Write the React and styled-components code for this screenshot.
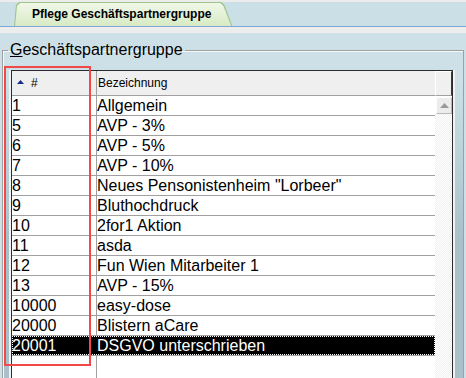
import React from 'react';
import styled, { createGlobalStyle } from 'styled-components';

const GlobalStyle = createGlobalStyle`
    body {
        margin: 0;
        background: #cde0e8;
        font-family: "Liberation Sans", Arial, sans-serif;
    }
`;

const rows = [
    { id: '1', name: 'Allgemein' },
    { id: '5', name: 'AVP - 3%' },
    { id: '6', name: 'AVP - 5%' },
    { id: '7', name: 'AVP - 10%' },
    { id: '8', name: 'Neues Pensonistenheim "Lorbeer"' },
    { id: '9', name: 'Bluthochdruck' },
    { id: '10', name: '2for1 Aktion' },
    { id: '11', name: 'asda' },
    { id: '12', name: 'Fun Wien Mitarbeiter 1' },
    { id: '13', name: 'AVP - 15%' },
    { id: '10000', name: 'easy-dose' },
    { id: '20000', name: 'Blistern aCare' },
    { id: '20001', name: 'DSGVO unterschrieben', selected: true },
];

function App() {
    return (
        <Screen>
            <GlobalStyle />
            <TabStrip>
                <Tab>
                    <span>Pflege Geschäftspartnergruppe</span>
                </Tab>
            </TabStrip>
            <Panel>
                <GroupBox>
                    <Legend>
                        <u>G</u>eschäftspartnergruppe
                    </Legend>
                    <Grid>
                        <Columns>
                            <HeaderRow>
                                <HeaderCell>
                                    <SortArrow width="7" height="4" viewBox="0 0 7 4">
                                        <polygon points="0,4 3.5,0 7,4" fill="#1a2a8c" />
                                    </SortArrow>
                                    #
                                </HeaderCell>
                                <HeaderCell>Bezeichnung</HeaderCell>
                            </HeaderRow>
                            {rows.map((row) => (
                                <Row key={row.id} $selected={row.selected}>
                                    <Cell>{row.id}</Cell>
                                    <Cell>{row.name}</Cell>
                                </Row>
                            ))}
                            <Filler>
                                <Cell />
                                <Cell />
                            </Filler>
                        </Columns>
                        <ScrollBar>
                            <ScrollCorner />
                            <ScrollButton>
                                <svg width="9" height="5" viewBox="0 0 9 5">
                                    <polygon points="0,5 4.5,0 9,5" fill="#9a9a9a" />
                                </svg>
                            </ScrollButton>
                            <Track />
                        </ScrollBar>
                    </Grid>
                </GroupBox>
            </Panel>
            <Highlight />
        </Screen>
    );
}

const Screen = styled.div`
    position: relative;
    width: 466px;
    height: 378px;
    overflow: hidden;
    display: flex;
    flex-direction: column;
`;

const TabStrip = styled.div`
    height: 28px;
    border-top: 2px solid #ececec;
    border-bottom: 1px solid #7ea8d6;
    background: #cbdfe7;
    padding-left: 14px;
    display: flex;
    align-items: flex-end;
`;

const Tab = styled.div`
    position: relative;
    height: 24px;
    padding: 0 21px 0 18px;
    display: flex;
    align-items: center;
    font-size: 12px;
    font-weight: bold;
    color: #000;

    &::before,
    &::after {
        content: '';
        position: absolute;
        clip-path: polygon(2px 3px, 5px 0, calc(100% - 11px) 0, calc(100% - 8px) 3px, 100% 100%, 0 100%);
    }

    &::before {
        inset: 0;
        background: #9dc58a;
    }

    &::after {
        inset: 1px 1px 0 1px;
        background: linear-gradient(#f1f8e9, #d6eac3);
    }

    span {
        position: relative;
        z-index: 1;
    }
`;

const Panel = styled.div`
    flex: 1;
    border-top: 6px solid #ededed;
    background: #cde0e8;
    display: flex;
    flex-direction: column;
`;

const GroupBox = styled.fieldset`
    margin: 8px 2px 0 2px;
    padding: 11px 10px 0 8px;
    height: 400px;
    border: 1px solid #a0a0a0;
    box-shadow: inset 1px 1px 0 #f4f8fa;
    background: linear-gradient(#cde0e8 0, #cde0e8 30px, #aac0c8 190px, #aac0c8 100%);
    min-width: 0;
`;

const Legend = styled.legend`
    margin-left: -3px;
    padding: 0 2px;
    font-size: 16px;
    line-height: 18px;
    color: #000;
`;

const Grid = styled.div`
    display: flex;
    height: 320px;
    border: 1px solid #2c2c2c;
    border-bottom: none;
    background: #fff;
    box-shadow: -2px 0 0 #eef3f5, 2px 0 0 #eef3f5;
`;

const Columns = styled.div`
    flex: 1;
    display: flex;
    flex-direction: column;
`;

const HeaderRow = styled.div`
    display: grid;
    grid-template-columns: 85px 1fr;
    height: 25px;
    border-bottom: 1px solid #a0a0a0;
    background: #efefef;
    box-sizing: border-box;
`;

const HeaderCell = styled.div`
    display: flex;
    align-items: center;
    gap: 7px;
    padding-left: 1px;
    font-size: 12px;
    color: #000;

    &:first-child {
        padding-left: 5px;
        border-right: 1px solid #a0a0a0;
    }
`;

const SortArrow = styled.svg`
    margin-top: -2px;
`;

const Row = styled.div`
    position: relative;
    display: grid;
    grid-template-columns: 85px 1fr;
    height: 20px;
    border-bottom: 1px solid #a0a0a0;
    box-sizing: border-box;
    background: ${(p) => (p.$selected ? '#000' : '#fff')};
    color: ${(p) => (p.$selected ? '#fff' : '#000')};

    &::after {
        content: '';
        display: ${(p) => (p.$selected ? 'block' : 'none')};
        position: absolute;
        inset: 0;
        border: 1px dotted #fff;
        pointer-events: none;
    }

    & > div:first-child {
        border-right-color: ${(p) => (p.$selected ? '#000' : '#a0a0a0')};
    }
`;

const Filler = styled.div`
    flex: 1;
    display: grid;
    grid-template-columns: 85px 1fr;
`;

const Cell = styled.div`
    font-size: 16px;
    line-height: 19px;
    white-space: nowrap;
    overflow: hidden;

    &:first-child {
        border-right: 1px solid #a0a0a0;
    }
`;

const ScrollBar = styled.div`
    width: 17px;
    display: flex;
    flex-direction: column;
`;

const ScrollCorner = styled.div`
    height: 25px;
    box-sizing: border-box;
    background: #f0f0f0;
    border-top: 1px solid #fff;
    border-left: 1px solid #fff;
    border-right: 1px solid #3a3a3a;
    border-bottom: 1px solid #a0a0a0;
`;

const ScrollButton = styled.div`
    height: 17px;
    box-sizing: border-box;
    margin: 1px 0 0 1px;
    background: #ececec;
    border: 1px solid #fdfdfd;
    border-right-color: #b8b8b8;
    border-bottom-color: #b8b8b8;
    display: flex;
    align-items: center;
    justify-content: center;
`;

const Track = styled.div`
    flex: 1;
    background: repeating-conic-gradient(#ffffff 0 25%, #f0f0f0 0 50%) 0 0 / 2px 2px;
`;

const Highlight = styled.div`
    position: absolute;
    left: 4px;
    top: 66px;
    width: 87px;
    height: 300px;
    box-sizing: border-box;
    border: 2px solid #f24848;
    pointer-events: none;
`;

export default App;
